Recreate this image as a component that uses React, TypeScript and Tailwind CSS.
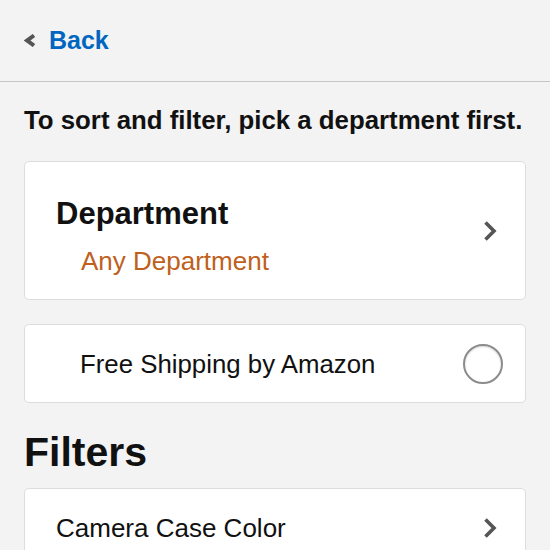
import { useState } from "react";

function ChevronRight() {
  return (
    <svg width="14" height="22" viewBox="0 0 14 22" className="shrink-0">
      <polyline
        points="2.5,2.5 11,11 2.5,19.5"
        fill="none"
        stroke="#555555"
        strokeWidth="3.6"
      />
    </svg>
  );
}

function ChevronLeft() {
  return (
    <svg width="12" height="13" viewBox="0 0 12 13" className="shrink-0">
      <polyline
        points="10,1.5 3.2,6.5 10,11.5"
        fill="none"
        stroke="#555555"
        strokeWidth="4"
      />
    </svg>
  );
}

export default function App() {
  const [freeShipping, setFreeShipping] = useState(false);

  return (
    <div className="min-h-screen bg-[#f3f3f3] font-['Liberation_Sans',Arial,sans-serif] text-[#111111]">
      <div className="h-[82px] border-b border-[#c6c6c6] flex items-center pl-6 gap-[13px]">
        <ChevronLeft />
        <span className="text-[25px] font-bold text-[#0066c0] leading-none">
          Back
        </span>
      </div>

      <div className="px-6 pt-[23px]">
        <h2 className="text-[25.8px] leading-[30px] font-bold">
          To sort and filter, pick a department first.
        </h2>

        <div className="mt-[26px] bg-white border border-[#dddddd] rounded-[5px] flex items-center justify-between pl-[31px] pr-[28px]">
          <div className="pt-[34px] pb-[23px]">
            <div className="text-[31px] leading-[36px] font-bold">
              Department
            </div>
            <div className="mt-[14px] ml-[25px] text-[26px] leading-[30px] text-[#c0601c]">
              Any Department
            </div>
          </div>
          <ChevronRight />
        </div>

        <div
          className="mt-[24px] h-[79px] bg-white border border-[#dddddd] rounded-[5px] flex items-center justify-between pl-[55px] pr-[22px]"
          onClick={() => setFreeShipping(!freeShipping)}
        >
          <span className="text-[25.8px] leading-[30px]">
            Free Shipping by Amazon
          </span>
          <span className="w-10 h-10 rounded-full border-2 border-[#8c8c8c] bg-white shadow-[inset_0_1px_2px_rgba(0,0,0,0.15)]" />
        </div>

        <h2 className="mt-[27px] text-[41px] leading-[44px] font-bold">
          Filters
        </h2>

        <div className="mt-[14px] h-[79px] bg-white border border-[#dddddd] rounded-[5px] flex items-center justify-between pl-[31px] pr-[28px]">
          <span className="text-[26px] leading-[30px]">Camera Case Color</span>
          <ChevronRight />
        </div>
      </div>
    </div>
  );
}
